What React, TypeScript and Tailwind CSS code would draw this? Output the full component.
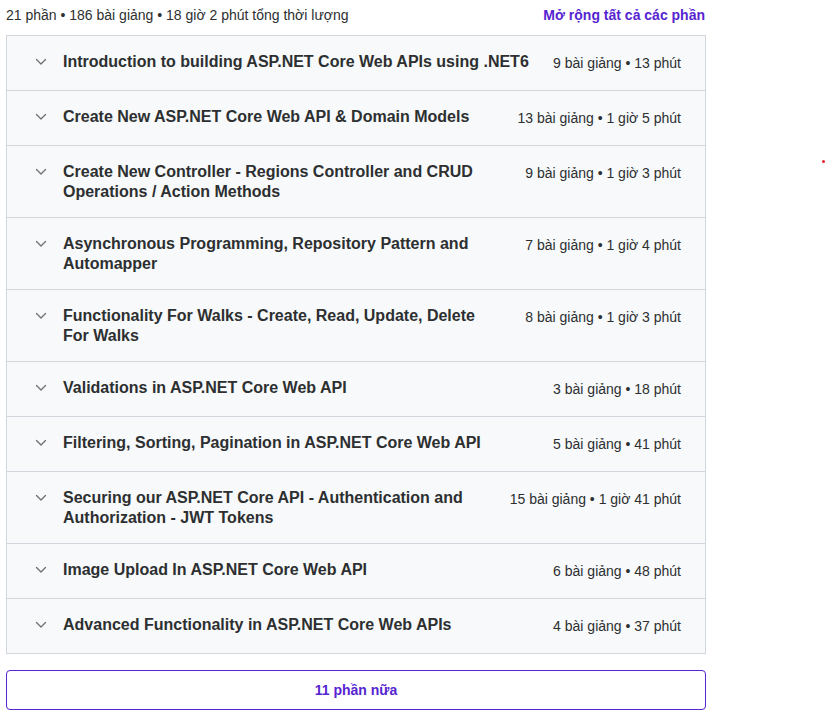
import React from 'react';

type Section = { title: string; meta: string };

const sections: Section[] = [
    { title: 'Introduction to building ASP.NET Core Web APIs using .NET6', meta: '9 bài giảng • 13 phút' },
    { title: 'Create New ASP.NET Core Web API & Domain Models', meta: '13 bài giảng • 1 giờ 5 phút' },
    { title: 'Create New Controller - Regions Controller and CRUD Operations / Action Methods', meta: '9 bài giảng • 1 giờ 3 phút' },
    { title: 'Asynchronous Programming, Repository Pattern and Automapper', meta: '7 bài giảng • 1 giờ 4 phút' },
    { title: 'Functionality For Walks - Create, Read, Update, Delete For Walks', meta: '8 bài giảng • 1 giờ 3 phút' },
    { title: 'Validations in ASP.NET Core Web API', meta: '3 bài giảng • 18 phút' },
    { title: 'Filtering, Sorting, Pagination in ASP.NET Core Web API', meta: '5 bài giảng • 41 phút' },
    { title: 'Securing our ASP.NET Core API - Authentication and Authorization - JWT Tokens', meta: '15 bài giảng • 1 giờ 41 phút' },
    { title: 'Image Upload In ASP.NET Core Web API', meta: '6 bài giảng • 48 phút' },
    { title: 'Advanced Functionality in ASP.NET Core Web APIs', meta: '4 bài giảng • 37 phút' },
];

const SectionRow: React.FC<Section & { last: boolean }> = ({ title, meta, last }) => (
    <div className={`flex items-start gap-6 bg-[#f7f9fa] pt-4 pb-[15px] pl-[28px] pr-6 ${last ? '' : 'border-b border-[#d1d7dc]'}`}>
        <div className="flex min-w-0 flex-1 items-start gap-4">
            <svg width="12" height="20" viewBox="0 0 12 20" fill="none" className="shrink-0">
                <path d="M1.5 7.5L6 12L10.5 7.5" stroke="#6a6f73" strokeWidth="1.3" strokeLinecap="round" strokeLinejoin="round" />
            </svg>
            <h3 className="min-h-[23px] text-base font-bold leading-5 text-[#2d2f31]">{title}</h3>
        </div>
        <span className="shrink-0 pt-[2px] text-sm leading-[1.4] text-[#2d2f31]">{meta}</span>
    </div>
);

const App: React.FC = () => {
    return (
        <div className="relative min-h-[720px] bg-white px-[6px] font-['Liberation_Sans',Arial,sans-serif]">
            <div className="w-[700px]">
                <div className="mb-[5px] flex h-[30px] items-center justify-between">
                    <span className="text-sm text-[#2d2f31]">21 phần • 186 bài giảng • 18 giờ 2 phút tổng thời lượng</span>
                    <button className="pr-px text-sm font-bold text-[#5624d0]">Mở rộng tất cả các phần</button>
                </div>

                <div className="border border-[#d1d7dc]">
                    {sections.map((s, i) => (
                        <SectionRow key={s.title} {...s} last={i === sections.length - 1} />
                    ))}
                </div>

                <button className="mt-4 flex h-10 w-full items-center justify-center rounded border border-[#5624d0] text-sm font-bold text-[#5624d0]">
                    11 phần nữa
                </button>
            </div>

            <div className="absolute left-[822px] top-[160px] h-[3px] w-[3px] rounded-full bg-[#e8202a]" />
        </div>
    );
};

export default App;
